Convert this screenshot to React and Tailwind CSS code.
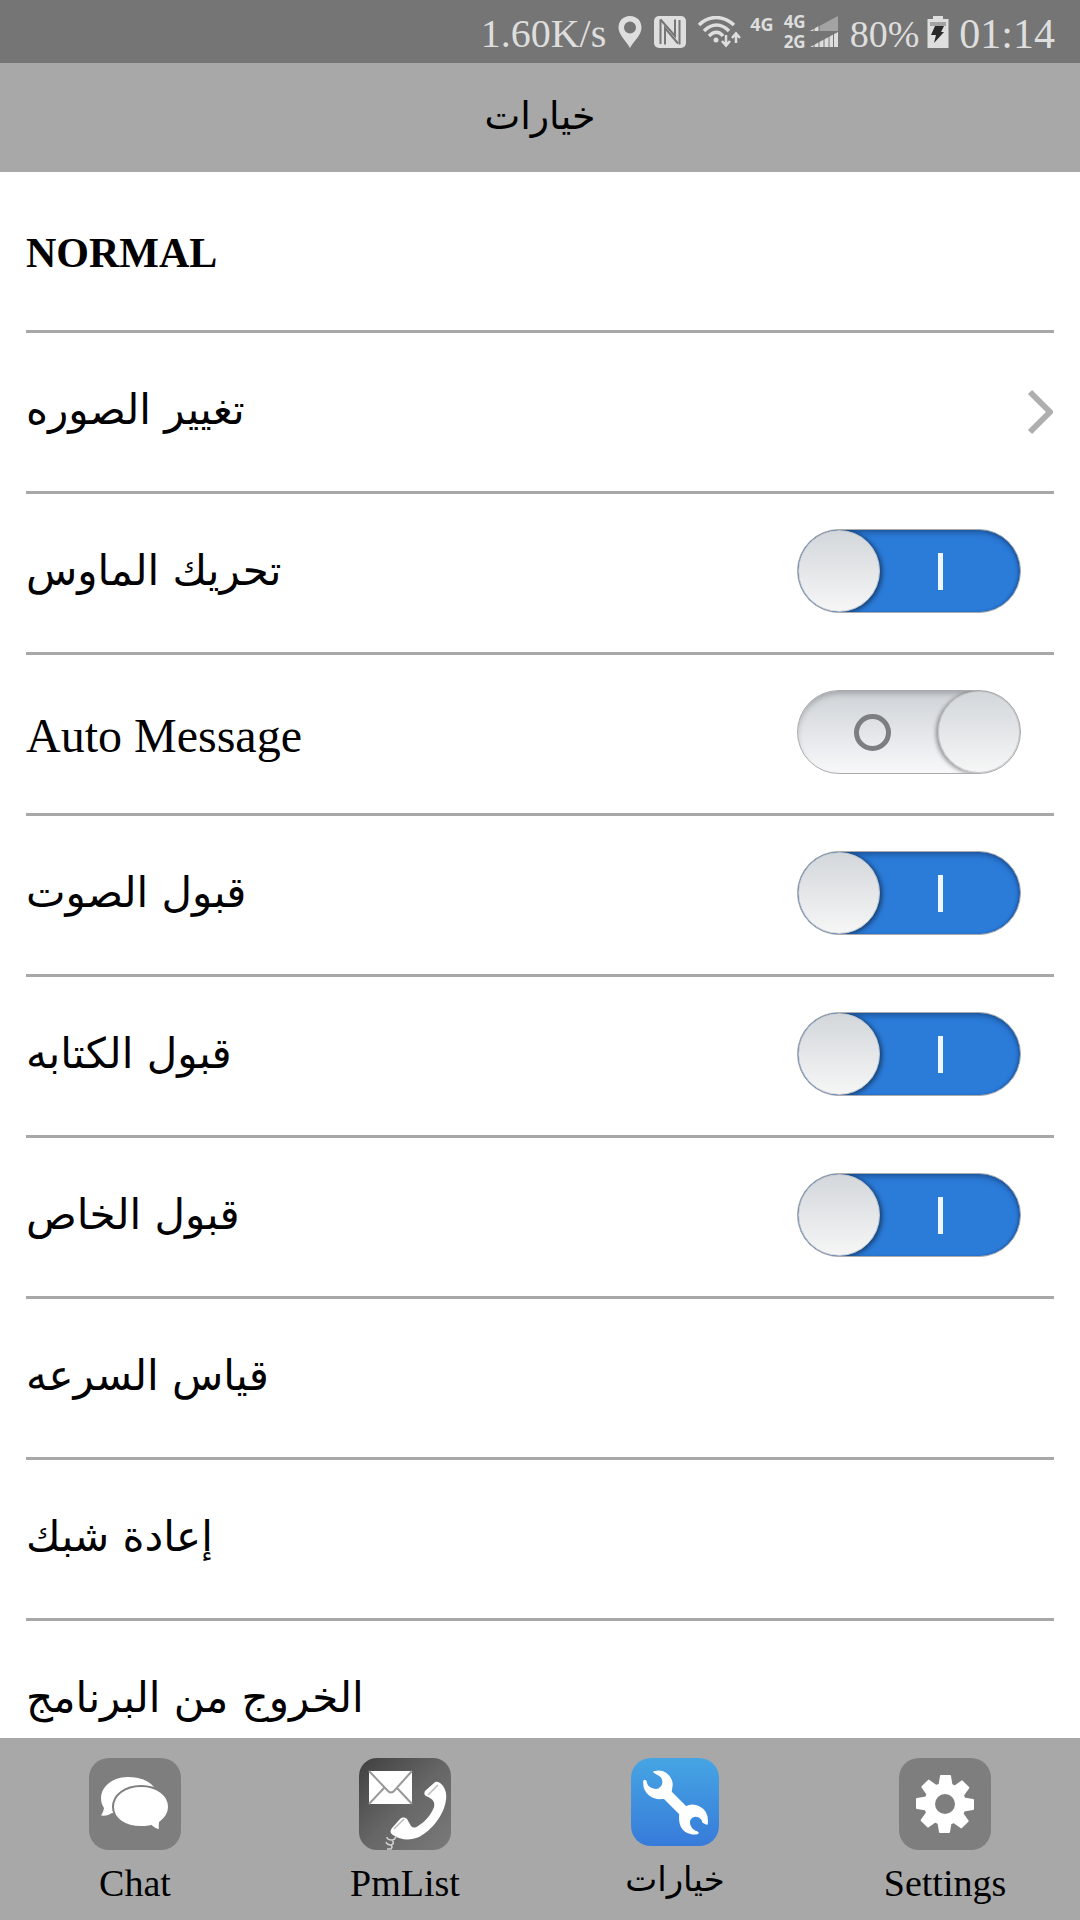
import { useState } from "react";

const LATIN = "font-['Liberation_Serif','DejaVu_Sans',serif]";
const ARABIC = "font-['DejaVu_Sans',sans-serif]";

function StatusBar() {
  return (
    <div className="flex h-[63px] shrink-0 items-center justify-end bg-[#757575] pr-[25px] text-[40px] leading-none text-[#dedede]">
      <span className="pt-1">1.60K/s</span>
      <svg className="ml-3 h-8 w-6" viewBox="0 0 24 32" fill="currentColor" aria-hidden="true">
        <path fillRule="evenodd" d="M12 0C5 0 .5 5 .5 11.5.5 19 8 24.500 12 32c4-7.500 11.500-12.500 11.500-20.500C23.500 5 19 0 12 0zm0 5.500a6 6 0 1 1 0 12 6 6 0 0 1 0-12z" />
      </svg>
      <svg className="ml-3 h-8 w-8" viewBox="0 0 32 32" aria-hidden="true">
        <rect width="32" height="32" rx="5" fill="#dedede" />
        <path d="M6.500 3.500V28M11 28.500V12l13 15.500" fill="none" stroke="#757575" strokeWidth="2" />
        <path d="M6.500 3.500L21 20V3.500M25.500 4v24.500" fill="none" stroke="#757575" strokeWidth="2" />
      </svg>
      <svg className="ml-3 h-8 w-11" viewBox="0 0 44 32" fill="none" stroke="currentColor" strokeWidth="3.500" aria-hidden="true">
        <path d="M1 9C11-1 25-1 36 9M6 15c8-8 17-8 25 0M11 20c5-5 10-5 14 0" />
        <circle cx="18" cy="24" r="2.500" fill="currentColor" stroke="none" />
        <path d="M28 19v10M24 25l4 4.500 4-4.500M38 27V17M34 22l4-4.500 4 4.500" strokeWidth="2.500" />
      </svg>
      <span className="ml-2 pb-4 font-['Open_Sans',sans-serif] text-lg leading-4 font-bold">4G</span>
      <span className="ml-2.5 flex flex-col font-['Open_Sans',sans-serif] text-[17px] leading-5 font-bold">
        <span>4G</span>
        <span>2G</span>
      </span>
      <svg className="ml-1 h-8 w-7" viewBox="0 0 28 32" aria-hidden="true">
        <path d="M28 0v15H0z" fill="#a3a3a3" />
        <path d="M9 10v5H0z" fill="#dedede" />
        <path d="M28 16v15H0z" fill="#dedede" />
        <path d="M4 10v22M9 8v24M14 16v16M19 16v16M23.500 16v16" stroke="#757575" strokeWidth="1" />
      </svg>
      <span className="ml-3 pt-1 text-[38px]">80%</span>
      <svg className="ml-2 h-8 w-[22px]" viewBox="0 0 22 32" aria-hidden="true">
        <path d="M6 0h10v3h5.500v29H.500V3H6z" fill="#dedede" />
        <path d="M3 6h16v4H3z" fill="#a3a3a3" />
        <path d="M8 10h9l-3 6h3L7 27l2-8H4z" fill="#292929" />
      </svg>
      <span className="ml-2.5 pt-1 text-[42px]">01:14</span>
    </div>
  );
}

function Toggle({ on, onChange, id }) {
  return (
    <span className="relative mr-[33px] mb-1 block">
      <input
        id={id}
        type="checkbox"
        checked={on}
        onChange={onChange}
        className="absolute inset-0 h-full w-full cursor-pointer opacity-0"
      />
      <span
        aria-hidden="true"
        className={
          "pointer-events-none flex h-[84px] w-56 items-center justify-between overflow-hidden rounded-full border border-[#a9abae] " +
          (on
            ? "bg-[#2b7bd9] shadow-[inset_0_4px_6px_-2px_#1b4f91,inset_-2px_0_3px_-1px_#1b4f91]"
            : "flex-row-reverse bg-linear-to-b from-[#cfd3d7] to-[#f8f8fa] shadow-[inset_0_4px_6px_-2px_#9a9ca0]")
        }
      >
        <span
          className={
            "h-[82px] w-[82px] rounded-full border border-[#c4c6c9] bg-linear-to-b from-[#d3d7db] to-[#f6f6f6] " +
            (on ? "shadow-[2px_1px_5px_#00000088]" : "shadow-[-2px_1px_4px_#00000066]")
          }
        />
        {on ? (
          <span className="mr-[77px] h-[37px] w-[5px] bg-[#edf5ff]" />
        ) : (
          <span className="ml-14 h-[37px] w-[37px] rounded-full border-5 border-[#7c7e82]" />
        )}
      </span>
    </span>
  );
}

const rows = [
  { text: "تغيير الصوره", kind: "link" },
  { text: "تحريك الماوس", kind: "toggle", on: true },
  { text: "Auto Message", kind: "toggle", on: false, latin: true },
  { text: "قبول الصوت", kind: "toggle", on: true },
  { text: "قبول الكتابه", kind: "toggle", on: true },
  { text: "قبول الخاص", kind: "toggle", on: true },
  { text: "قياس السرعه", kind: "action" },
  { text: "إعادة شبك", kind: "action" },
  { text: "الخروج من البرنامج", kind: "action" },
];

const ROW = "flex h-[161px] w-full items-center justify-between border-b-3 border-[#a8a8a8] text-left";

function Row({ row, index }) {
  const [on, setOn] = useState(row.on);
  const label = row.latin ? (
    <span className="pt-1 text-5xl leading-none">{row.text}</span>
  ) : (
    <span className={ARABIC + " pb-1 text-[42px] leading-none"}>{row.text}</span>
  );
  if (row.kind === "toggle") {
    const id = "option-" + index;
    return (
      <li className={ROW}>
        <label htmlFor={id} className="flex grow">{label}</label>
        <Toggle id={id} on={on} onChange={() => setOn(!on)} />
      </li>
    );
  }
  return (
    <li>
      <button type="button" className={ROW}>
        {label}
        {row.kind === "link" && (
          <svg className="h-12 w-7" viewBox="0 0 28 48" fill="none" stroke="#aeaeae" strokeWidth="6" strokeLinejoin="round" aria-hidden="true">
            <path d="M4 4l20 20L4 44" />
          </svg>
        )}
      </button>
    </li>
  );
}

function ChatIcon() {
  return (
    <svg className="size-[92px]" viewBox="0 0 92 92" aria-hidden="true">
      <rect width="92" height="92" rx="20" fill="#7e7e7e" />
      <path d="M39 19C23 19 12 29 12 40c0 4 1 7 3 10-.500 3-1.500 5-3 7.500 5 .500 8-.500 11-2.500 15 3 42-4 42-26C59 22 50 19 39 19z" fill="#fff" />
      <path d="M52 28c-16 0-28 9-28 21s12 20 28 20c4 0 7 0 10-1 3 3 6 4 9 4.500-.500-3-.500-5 0-8C77 60 80 55 80 49c0-12-12-21-28-21z" fill="#fff" stroke="#7e7e7e" strokeWidth="2" />
    </svg>
  );
}

function PmIcon() {
  return (
    <svg className="size-[92px]" viewBox="0 0 92 92" aria-hidden="true">
      <defs>
        <linearGradient id="pm-fill" x1="0" y1="0" x2="1" y2="1">
          <stop offset="0" stopColor="#3f3f3f" />
          <stop offset=".5" stopColor="#666" />
          <stop offset="1" stopColor="#7a7a7a" />
        </linearGradient>
      </defs>
      <rect width="92" height="92" rx="18" fill="url(#pm-fill)" />
      <rect x="10" y="13" width="43" height="33" fill="#fff" />
      <path d="M10 13l19 20q3 3 6 0l18-20M10 46l15-16M53 46L38 30" fill="none" stroke="#999" strokeWidth="2" />
      <path d="M67 38c-2-1-2-3-1-5l9-8c2-2 4-1 6 0 5 4 7 10 6 17-2 15-14 30-27 37-9 4-19 3-26-2-3-2-3-4-1-7l8-9c2-2 5-2 7 0l4 7c2 2 4 2 7 0 7-4 13-11 16-19 1-4 0-8-8-11z" fill="#fff" />
      <path d="M69 37l10-10M35 71l10-10" stroke="#bbb" strokeWidth="1.500" />
      <path d="M37 78q-1 4-4 4-5 0-5-3M33 82q3 4-1 5-4 0-5-3M32 87q2 2 0 4h-4" fill="none" stroke="#d0d0d0" strokeWidth="1.500" />
    </svg>
  );
}

function WrenchIcon() {
  return (
    <svg className="mb-1 size-[88px]" viewBox="0 0 88 88" aria-hidden="true">
      <defs>
        <linearGradient id="wrench-fill" x1="0" y1="0" x2="0" y2="1">
          <stop offset="0" stopColor="#46a5e3" />
          <stop offset="1" stopColor="#377bda" />
        </linearGradient>
      </defs>
      <rect width="88" height="88" rx="20" fill="url(#wrench-fill)" />
      <path d="M23 14c9-3 17 3 18 12 0 3-1 5-1 8l15 15c4-2 9-2 13 0 6 3 9 9 8 17-1 0-2-1-4-2-1-5-9-9-13-3-2 4 0 11 7 13l1 1c-2 1-5 1-8 0-8-2-11-9-10-19L33 40c-10 2-21-4-20-17 1-1 2 0 2 1 1 6 8 9 13 7 5-3 6-10 0-14-2-1-4-2-5-3z" fill="#fff" stroke="#fff" strokeWidth="1.500" strokeLinejoin="round" />
    </svg>
  );
}

const teeth = [0, 45, 90, 135, 180, 225, 270, 315];

function GearIcon() {
  return (
    <svg className="size-[92px]" viewBox="0 0 92 92" aria-hidden="true">
      <rect width="92" height="92" rx="20" fill="#7e7e7e" />
      <g fill="#fff">
        {teeth.map((angle) => (
          <path key={angle} d="M39 30l2-12q0-1 1-1h9q1 0 1 1l2 12z" transform={`rotate(${angle} 46 46)`} />
        ))}
        <circle cx="46" cy="46" r="21" />
      </g>
      <circle cx="46" cy="46" r="10" fill="#7e7e7e" />
    </svg>
  );
}

const tabs = [
  { label: "Chat", Icon: ChatIcon },
  { label: "PmList", Icon: PmIcon },
  { label: "خيارات", Icon: WrenchIcon, arabic: true },
  { label: "Settings", Icon: GearIcon },
];

export default function App() {
  return (
    <div className={LATIN + " flex h-screen flex-col overflow-hidden bg-white text-black"}>
      <StatusBar />
      <header className="flex h-[109px] shrink-0 items-center justify-center bg-[#a8a8a8]">
        <h1 className={ARABIC + " pb-1 text-[38px] leading-none"}>خيارات</h1>
      </header>
      <main className="min-h-0 grow overflow-hidden px-[26px]">
        <h2 className={ROW + " text-[42px] leading-none font-bold"}>
          <span className="pt-1">NORMAL</span>
        </h2>
        <ul>
          {rows.map((row, index) => (
            <Row key={row.text} row={row} index={index} />
          ))}
        </ul>
      </main>
      <nav className="grid h-[182px] shrink-0 grid-cols-4 bg-[#a8a8a8] pt-5">
        {tabs.map(({ label, Icon, arabic }) => (
          <button key={label} type="button" className="flex flex-col items-center">
            <Icon />
            <span className={arabic ? ARABIC + " mt-3 text-[34px] leading-none" : "mt-3.5 text-[38px] leading-none"}>{label}</span>
          </button>
        ))}
      </nav>
    </div>
  );
}
